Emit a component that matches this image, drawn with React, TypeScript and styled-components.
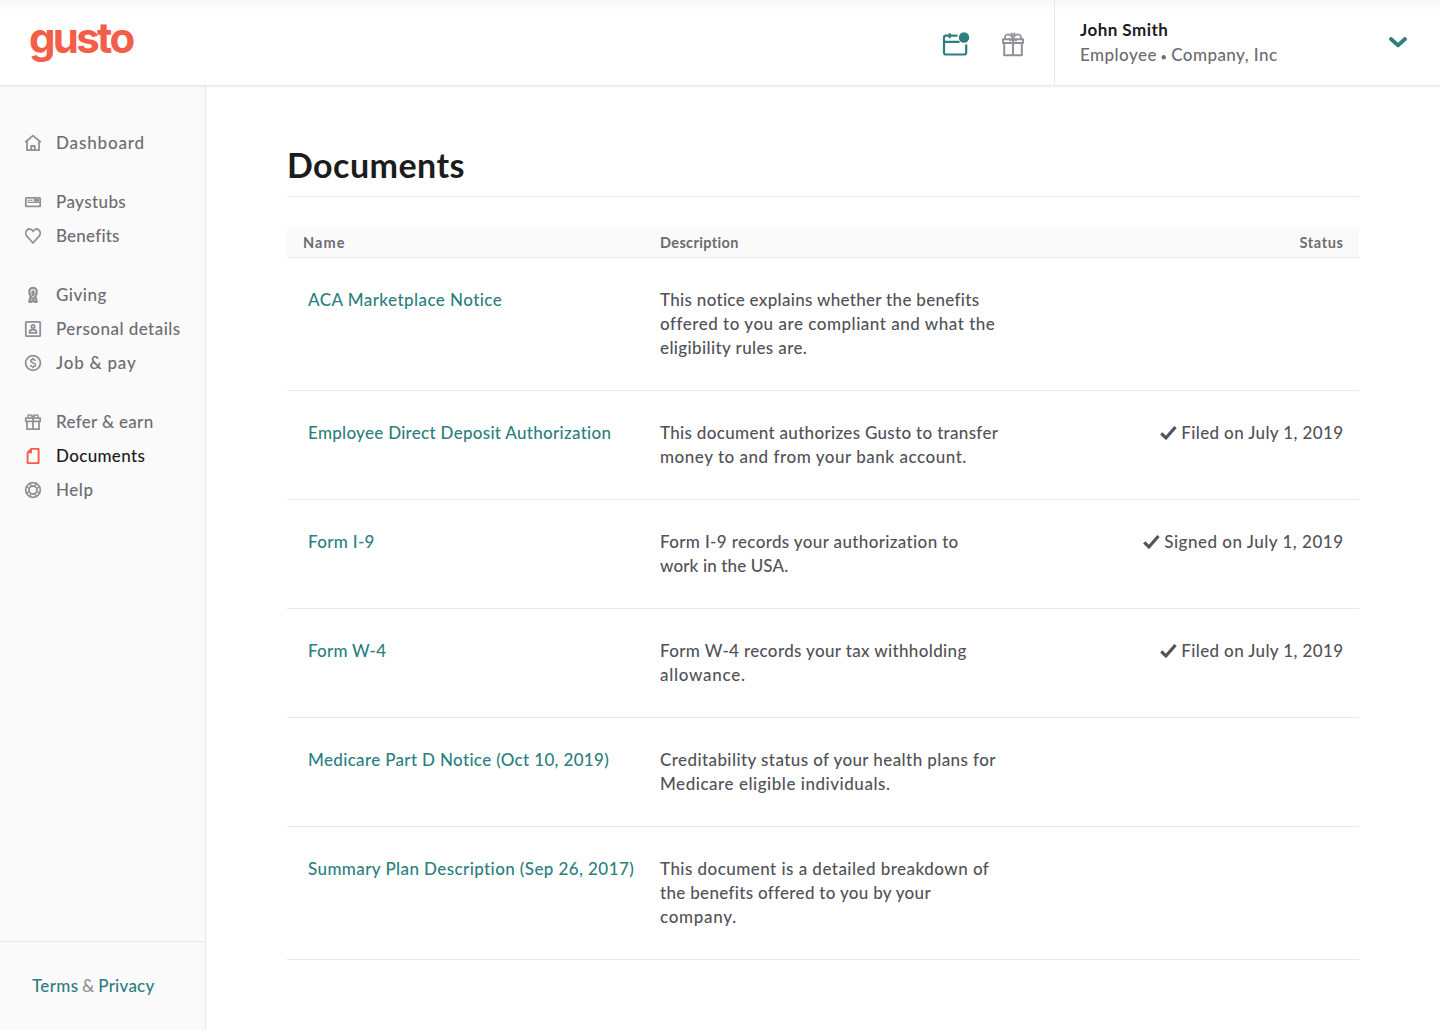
import React from 'react';
import styled, { createGlobalStyle } from 'styled-components';

const teal = '#2b7f80';
const line = '#e8e8ea';

const GlobalStyle = createGlobalStyle`
  * { box-sizing: border-box; }
  body {
    margin: 0;
    background: #fff;
    font-family: Lato, "Open Sans", sans-serif;
    font-size: 17px;
    line-height: 24px;
    font-weight: 500;
    color: #525257;
    -webkit-font-smoothing: antialiased;
  }
  a { text-decoration: none; color: inherit; }
`;

const Track = styled.span<{ $ls: number }>`
  letter-spacing: ${p => p.$ls}px;
  margin-right: ${p => -p.$ls}px;
  white-space: nowrap;
`;

const Page = styled.div`
  display: flex;
  flex-direction: column;
  height: 1030px;
`;
const Header = styled.header`
  display: flex;
  flex: none;
  height: 86px;
  border-bottom: 1px solid ${line};
  background: linear-gradient(#f8f8f8, #fff 12px);
  box-shadow: 0 1px 3px rgba(0, 0, 0, 0.05);
  z-index: 1;
`;
const Logo = styled.a`
  flex: 1;
  padding: 11px 0 0 29px;
  font-family: Inter, sans-serif;
  font-size: 42px;
  line-height: 54px;
  font-weight: 700;
  color: #f45d48;
`;
const Actions = styled.div`
  display: flex;
  align-items: center;
  gap: 31px;
  padding: 3px 29px 0 0;
`;
const Account = styled.div`
  display: flex;
  justify-content: space-between;
  width: 386px;
  padding: 18px 32px 0 25px;
  border-left: 1px solid ${line};
  color: #6c6c72;
`;
const AccountLine = styled.div<{ $strong?: boolean }>`
  height: 25px;
  line-height: 24px;
  ${p => p.$strong && 'font-weight: 700; color: #1c1c1c;'}
`;
const Bullet = styled.span`
  margin: 0 -1px;
  font-size: 11px;
  line-height: 1;
`;
const Chevron = styled.svg`
  margin-top: 17px;
`;
const Body = styled.div`
  display: flex;
  flex: 1;
  min-height: 0;
`;
const Sidebar = styled.aside`
  display: flex;
  flex-direction: column;
  justify-content: space-between;
  width: 206px;
  background: #fafafa;
  border-right: 1px solid ${line};
`;
const Nav = styled.nav`
  display: flex;
  flex-direction: column;
  gap: 25px;
  padding: 40px 0 0 24px;
`;
const NavItem = styled.a<{ $active?: boolean }>`
  display: flex;
  align-items: center;
  gap: 14px;
  height: 34px;
  color: ${p => (p.$active ? '#1c1c1c' : '#6c6c72')};
  svg { color: ${p => (p.$active ? '#f45d48' : '#919197')}; }
`;
const Legal = styled.div`
  display: flex;
  align-items: center;
  gap: 4px;
  height: 89px;
  padding-left: 32px;
  border-top: 1px solid ${line};
  color: #919197;
  a { color: ${teal}; }
`;
const Main = styled.main`
  flex: 1;
  padding: 52px 81px 0;
`;
const Title = styled.h1`
  margin: 0 0 30px;
  height: 59px;
  border-bottom: 1px solid ${line};
  font-size: 34px;
  line-height: 54px;
  font-weight: 700;
  color: #1c1c1c;
`;
const Row = styled.div`
  display: grid;
  grid-template-columns: 357px 357px 1fr;
  padding: 30px 0;
  border-bottom: 1px solid ${line};
`;
const HeadRow = styled(Row)`
  padding: 1px 0 0;
  background: #fafafa;
  font-size: 14.5px;
  font-weight: 700;
  line-height: 29px;
  height: 31px;
  color: #6c6c72;
`;
const Cell = styled.div<{ $right?: boolean }>`
  padding: 0 16px;
  text-align: ${p => (p.$right ? 'right' : 'left')};
`;
const DocLink = styled.a`
  margin-left: 5px;
  color: ${teal};
`;
const TextLine = styled.div`
  height: 24px;
`;
const Status = styled.div`
  display: flex;
  justify-content: flex-end;
  align-items: center;
  gap: 4px;
`;

const icons: Record<string, React.ReactNode> = {
  home: <><path d="M1.2 8.2 9 1.6l7.8 6.6M3 7.2v9h12v-9" /><path d="M7.2 16v-4h3.6v4" /></>,
  stub: <><rect x="1.8" y="4.8" width="14.4" height="8.6" rx=".6" /><path d="M3.5 7.2h5M3.5 9.4h12M10.3 6.6h4.2v1.3h-4.2z" strokeWidth="1.1" /></>,
  heart: <path d="M9 16 2.9 9.2C1.4 7.4 1.4 4.7 3 3.1c1.9-1.8 4.7-1.3 6 1.2 1.3-2.5 4.1-3 6-1.2 1.6 1.6 1.6 4.3.1 6.1z" />,
  ribbon: (
    <>
      <path d="M9 1.9c-4.3 0-4.6 5-2.3 8.4L5.2 15.9h2.3L9 13.2l1.5 2.7h2.3l-1.500-5.600C13.600 6.900 13.300 1.900 9 1.900z" strokeWidth="2.200" />
      <path d="M9 5c-1.300.6-1.100 2.900 0 4.600 1.100-1.700 1.300-4 0-4.600zM6.700 10.300 9 13.200l2.300-2.900" strokeWidth="1.800" />
    </>
  ),
  person: <><rect x="1.8" y="1.8" width="14.4" height="14.4" rx=".6" /><circle cx="9" cy="6.5" r="1.7" /><path d="M5.500 12.900c0-2.400 1.200-3.400 3.500-3.400s3.500 1 3.500 3.400z" /></>,
  dollar: <><circle cx="9" cy="9" r="7.4" /><path d="M11.400 6.900c-.3-1-1.200-1.500-2.400-1.500-1.400 0-2.300.7-2.300 1.700C6.700 9.600 11.500 8.300 11.500 11c0 1.100-1 1.700-2.500 1.700-1.300 0-2.300-.6-2.600-1.700M9 3.800v1.500M9 12.800v1.500" strokeWidth="1.600" /></>,
  gift: <><path d="M1.800 5.200h14.400v3.200H1.800zM3 8.400v7.800h12V8.400M9 5.200v11" /><path d="M9 4.800C7.500 1.900 5 1.300 4.200 2.300c-.7.900-.3 2 .6 2.600M9 4.800c1.500-2.900 4-3.500 4.800-2.500.7.900.3 2-.6 2.600M9 4.300 7.600 1.500M9 4.300l1.400-2.800" strokeWidth="1.400" /></>,
  doc: <><path d="M7.400 1.900h7.200v14.200H3.600V5.700z" strokeWidth="1.900" /><path d="M7.400 1.900v3.800H3.600z" fill="currentColor" strokeWidth="1.200" /></>,
  help: <><circle cx="9" cy="9" r="7.300" /><circle cx="9" cy="9" r="4" /><path d="M5.300 1.900 7.400 5.300M2 5.500l3.400 2M12.700 1.900l-2.100 3.400M16 5.500l-3.400 2M5.300 16.100l2.100-3.400M2 12.500l3.400-2M12.700 16.100l-2.100-3.400M16 12.500l-3.400-2" strokeWidth="1.300" /></>,
};

const Icon = ({ name }: { name: string }) => (
  <svg width="18" height="18" viewBox="0 0 18 18" fill="none" stroke="currentColor" strokeWidth="1.8" strokeLinejoin="round">
    {icons[name]}
  </svg>
);

const CalendarIcon = () => (
  <svg width="28" height="26" viewBox="0 0 28 26" fill="none" stroke={teal} strokeWidth="2.2">
    <path d="M15.5 4.7H4a2 2 0 0 0-2 2v14.800a2 2 0 0 0 2 2h18.200a2 2 0 0 0 2-2V13.500M2 10.900h15.500M7.700 2.200v5M5.500 4.700h4" />
    <circle cx="22" cy="6.500" r="5.200" fill={teal} stroke="none" />
  </svg>
);

const GiftIcon = () => (
  <svg width="24" height="26" viewBox="0 0 24 26" fill="none" stroke="#919197" strokeWidth="2" strokeLinejoin="round">
    <path d="M2 8.200h20v3.800H2zM3.200 12v12.300h17.600V12M12 8.200v16" />
    <path d="M4.200 8C2.600 4.200 7.300.6 12 7c4.700-6.400 9.400-2.800 7.800 1M8.500 10.200 12 7l3.500 3.200M10 1.800l2 2.400 2-2.400" strokeWidth="1.700" />
  </svg>
);

const CheckIcon = () => (
  <svg width="17" height="16" viewBox="0 0 17 16" fill="none" stroke="#525257" strokeWidth="3.2" strokeLinejoin="round">
    <path d="M1.300 8.300 5.900 13 15.500 2" />
  </svg>
);

type T = [string, number];

const groups: { icon: string; text: T; active?: boolean }[][] = [
  [{ icon: 'home', text: ['Dashboard', 0.86] }],
  [{ icon: 'stub', text: ['Paystubs', 0.4] }, { icon: 'heart', text: ['Benefits', 0.21] }],
  [
    { icon: 'ribbon', text: ['Giving', 0.5] },
    { icon: 'person', text: ['Personal details', 0.47] },
    { icon: 'dollar', text: ['Job & pay', 0.77] },
  ],
  [
    { icon: 'gift', text: ['Refer & earn', 0.32] },
    { icon: 'doc', text: ['Documents', 0.34], active: true },
    { icon: 'help', text: ['Help', 0.55] },
  ],
];

const documents: { name: T; lines: T[]; status?: T }[] = [
  {
    name: ['ACA Marketplace Notice', 0.44],
    lines: [
      ['This notice explains whether the benefits', 0.31],
      ['offered to you are compliant and what the', 0.52],
      ['eligibility rules are.', 0.38],
    ],
  },
  {
    name: ['Employee Direct Deposit Authorization', 0.29],
    lines: [['This document authorizes Gusto to transfer', 0.32], ['money to and from your bank account.', 0.53]],
    status: ['Filed on July 1, 2019', 0.37],
  },
  {
    name: ['Form I-9', 0.33],
    lines: [['Form I-9 records your authorization to', 0.36], ['work in the USA.', 0.13]],
    status: ['Signed on July 1, 2019', 0.5],
  },
  {
    name: ['Form W-4', 0.22],
    lines: [['Form W-4 records your tax withholding', 0.35], ['allowance.', 0.72]],
    status: ['Filed on July 1, 2019', 0.37],
  },
  {
    name: ['Medicare Part D Notice (Oct 10, 2019)', 0.34],
    lines: [['Creditability status of your health plans for', 0.41], ['Medicare eligible individuals.', 0.53]],
  },
  {
    name: ['Summary Plan Description (Sep 26, 2017)', 0.41],
    lines: [
      ['This document is a detailed breakdown of', 0.46],
      ['the benefits offered to you by your', 0.31],
      ['company.', 0.7],
    ],
  },
];

const Text = ({ t }: { t: T }) => <Track $ls={t[1]}>{t[0]}</Track>;

export default function App() {
  return (
    <Page>
      <GlobalStyle />
      <Header>
        <Logo><Text t={['gusto', -2.7]} /></Logo>
        <Actions><CalendarIcon /><GiftIcon /></Actions>
        <Account>
          <div>
            <AccountLine $strong><Text t={['John Smith', 0.45]} /></AccountLine>
            <AccountLine>
              <Track $ls={0.45}>Employee <Bullet>•</Bullet> Company, Inc</Track>
            </AccountLine>
          </div>
          <Chevron width="20" height="14" viewBox="0 0 20 14" fill="none" stroke={teal} strokeWidth="3.8" strokeLinecap="round" strokeLinejoin="round">
            <path d="M3 4l7 6.300 7-6.300" />
          </Chevron>
        </Account>
      </Header>
      <Body>
        <Sidebar>
          <Nav>
            {groups.map((items, i) => (
              <div key={i}>
                {items.map(item => (
                  <NavItem key={item.icon} $active={item.active}>
                    <Icon name={item.icon} />
                    <Text t={item.text} />
                  </NavItem>
                ))}
              </div>
            ))}
          </Nav>
          <Legal>
            <a><Text t={['Terms', 0.35]} /></a>
            <span>&amp;</span>
            <a><Text t={['Privacy', 0.25]} /></a>
          </Legal>
        </Sidebar>
        <Main>
          <Title><Text t={['Documents', 0.45]} /></Title>
          <HeadRow>
            <Cell><Text t={['Name', 1.1]} /></Cell>
            <Cell><Text t={['Description', 0.357]} /></Cell>
            <Cell $right><Text t={['Status', 0.65]} /></Cell>
          </HeadRow>
          {documents.map(d => (
            <Row key={d.name[0]}>
              <Cell><DocLink><Text t={d.name} /></DocLink></Cell>
              <Cell>{d.lines.map(l => <TextLine key={l[0]}><Text t={l} /></TextLine>)}</Cell>
              <Cell $right>{d.status && <Status><CheckIcon /><Text t={d.status} /></Status>}</Cell>
            </Row>
          ))}
        </Main>
      </Body>
    </Page>
  );
}
